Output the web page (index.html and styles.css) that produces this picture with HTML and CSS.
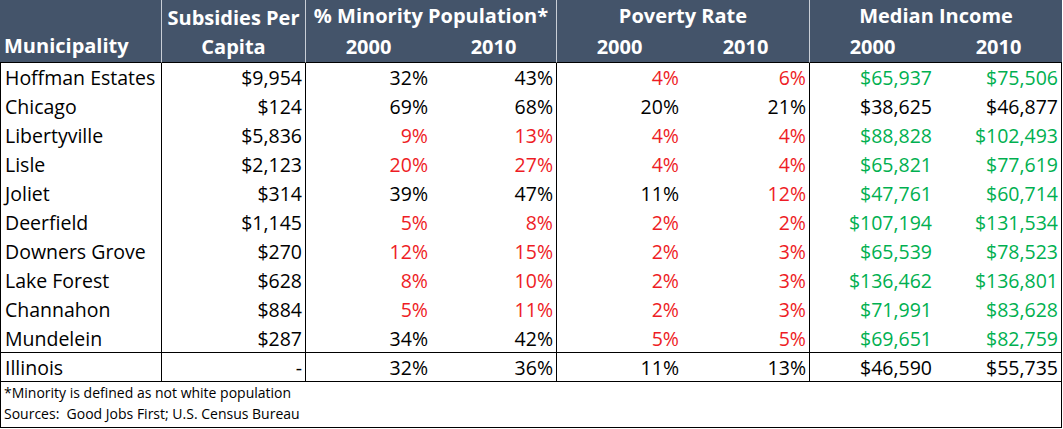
FILE: index.html
```html
<!DOCTYPE html>
<html>
<head>
<meta charset="utf-8">
<link rel="stylesheet" href="styles.css">
</head>
<body>
<div class="sheet">
  <div class="h h-muni">Municipality</div>
  <div class="h h-sub">Subsidies Per<br>Capita</div>
  <div class="h h-grp h-min">% Minority Population*</div>
  <div class="h h-grp h-pov">Poverty Rate</div>
  <div class="h h-grp h-med">Median Income</div>
  <div class="h h-yr sep">2000</div>
  <div class="h h-yr">2010</div>
  <div class="h h-yr sep">2000</div>
  <div class="h h-yr">2010</div>
  <div class="h h-yr sep">2000</div>
  <div class="h h-yr">2010</div>

  <div class="c name">Hoffman Estates</div><div class="c n sep">$9,954</div><div class="c n sep">32%</div><div class="c n">43%</div><div class="c n sep red">4%</div><div class="c n red">6%</div><div class="c n sep grn">$65,937</div><div class="c n last grn">$75,506</div>
  <div class="c name">Chicago</div><div class="c n sep">$124</div><div class="c n sep">69%</div><div class="c n">68%</div><div class="c n sep">20%</div><div class="c n">21%</div><div class="c n sep">$38,625</div><div class="c n last">$46,877</div>
  <div class="c name">Libertyville</div><div class="c n sep">$5,836</div><div class="c n sep red">9%</div><div class="c n red">13%</div><div class="c n sep red">4%</div><div class="c n red">4%</div><div class="c n sep grn">$88,828</div><div class="c n last grn">$102,493</div>
  <div class="c name">Lisle</div><div class="c n sep">$2,123</div><div class="c n sep red">20%</div><div class="c n red">27%</div><div class="c n sep red">4%</div><div class="c n red">4%</div><div class="c n sep grn">$65,821</div><div class="c n last grn">$77,619</div>
  <div class="c name">Joliet</div><div class="c n sep">$314</div><div class="c n sep">39%</div><div class="c n">47%</div><div class="c n sep">11%</div><div class="c n red">12%</div><div class="c n sep grn">$47,761</div><div class="c n last grn">$60,714</div>
  <div class="c name">Deerfield</div><div class="c n sep">$1,145</div><div class="c n sep red">5%</div><div class="c n red">8%</div><div class="c n sep red">2%</div><div class="c n red">2%</div><div class="c n sep grn">$107,194</div><div class="c n last grn">$131,534</div>
  <div class="c name">Downers Grove</div><div class="c n sep">$270</div><div class="c n sep red">12%</div><div class="c n red">15%</div><div class="c n sep red">2%</div><div class="c n red">3%</div><div class="c n sep grn">$65,539</div><div class="c n last grn">$78,523</div>
  <div class="c name">Lake Forest</div><div class="c n sep">$628</div><div class="c n sep red">8%</div><div class="c n red">10%</div><div class="c n sep red">2%</div><div class="c n red">3%</div><div class="c n sep grn">$136,462</div><div class="c n last grn">$136,801</div>
  <div class="c name">Channahon</div><div class="c n sep">$884</div><div class="c n sep red">5%</div><div class="c n red">11%</div><div class="c n sep red">2%</div><div class="c n red">3%</div><div class="c n sep grn">$71,991</div><div class="c n last grn">$83,628</div>
  <div class="c name">Mundelein</div><div class="c n sep">$287</div><div class="c n sep">34%</div><div class="c n">42%</div><div class="c n sep red">5%</div><div class="c n red">5%</div><div class="c n sep grn">$69,651</div><div class="c n last grn">$82,759</div>

  <div class="c name tot">Illinois</div><div class="c n sep tot">-</div><div class="c n sep tot">32%</div><div class="c n tot">36%</div><div class="c n sep tot">11%</div><div class="c n tot">13%</div><div class="c n sep tot">$46,590</div><div class="c n last tot">$55,735</div>

  <div class="foot">
    <div>*Minority is defined as not white population</div>
    <div>Sources:&nbsp; Good Jobs First; U.S. Census Bureau</div>
  </div>
</div>
</body>
</html>
```

FILE: styles.css
```css
html, body {
  margin: 0;
  padding: 0;
  background: #ffffff;
}

.sheet {
  display: grid;
  grid-template-columns: 161px 144px 126px 125px 126px 127px 126px 127px;
  grid-template-rows: 31px 32px repeat(9, 29px) 28px 30px 46px;
  width: 1062px;
  font-family: "Open Sans", "Noto Sans", "Liberation Sans", sans-serif;
  font-size: 19.5px;
  color: #000;
  box-sizing: border-box;
}

.sheet > div {
  box-sizing: border-box;
}

.h {
  background: #44546a;
  color: #ffffff;
  font-size: 20px;
  font-weight: bold;
  display: flex;
  align-items: center;
  justify-content: center;
  white-space: nowrap;
}

.h-muni {
  grid-row: 1 / 3;
  grid-column: 1;
  justify-content: flex-start;
  align-items: flex-end;
  padding: 0 0 3px 4px;
  border-bottom: 1px solid #000;
}

.h-sub {
  grid-row: 1 / 3;
  grid-column: 2;
  flex-direction: column;
  text-align: center;
  line-height: 29px;
  padding-top: 2px;
  border-left: 1px solid #c9ced6;
  border-bottom: 1px solid #000;
}

.h-grp {
  border-left: 1px solid #c9ced6;
}

.h-min { grid-column: 3 / 5; }
.h-pov { grid-column: 5 / 7; }
.h-med { grid-column: 7 / 9; }

.h-yr {
  border-bottom: 1px solid #000;
}

.h-yr.sep {
  border-left: 1px solid #c9ced6;
}

.c {
  display: flex;
  align-items: center;
  white-space: nowrap;
}

.c.name {
  border-left: 1px solid #000;
  padding-left: 4px;
}

.c.n {
  justify-content: flex-end;
  padding-right: 3px;
}

.c.sep {
  border-left: 1px solid #000;
}

.c.last {
  border-right: 1px solid #000;
}

.c.tot {
  border-top: 1px solid #000;
  border-bottom: 1px solid #000;
}

.red { color: #ee1c25; }
.grn { color: #00b050; }

.foot {
  grid-column: 1 / 9;
  border-left: 1px solid #000;
  border-right: 1px solid #000;
  border-bottom: 1px solid #000;
  font-size: 14px;
  line-height: 21px;
  padding: 0 0 0 3px;
}
```
